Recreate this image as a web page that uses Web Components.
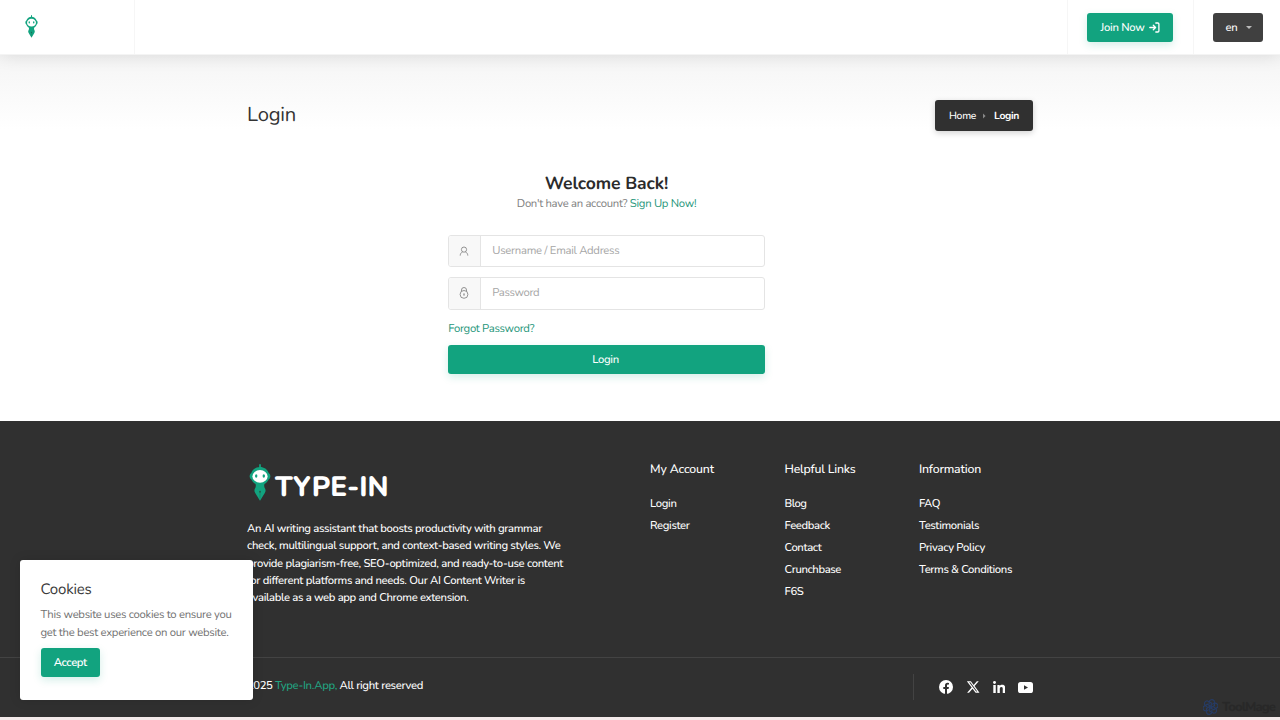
<!DOCTYPE html>
<html lang="en">
<head>
<meta charset="utf-8">
<title>Login - Type-In</title>
<style>
html,body{margin:0;height:720px;overflow:hidden;background:#fff}
body{font-family:Nunito,Lato,"Open Sans",sans-serif;font-size:11.3px;color:#333;text-rendering:geometricPrecision}
</style>
</head>
<body>
<login-page></login-page>
<script>
const make = (name, html, setup) => {
  const t = document.createElement('template');
  t.innerHTML = html;
  customElements.define(name, class extends HTMLElement {
    constructor() {
      super();
      this.attachShadow({mode: 'open'}).append(t.content.cloneNode(true));
    }
    connectedCallback() { if (setup) setup(this, this.shadowRoot); }
  });
};

make('login-page', `
<style>
:host{display:flex;flex-direction:column;height:720px;position:relative;overflow:hidden}
login-form{flex:1}
</style>
<site-header></site-header>
<title-bar></title-bar>
<login-form></login-form>
<site-footer></site-footer>
<cookie-card></cookie-card>
<site-mark></site-mark>`);

make('site-header', `
<style>
:host{display:flex;height:55px;box-sizing:border-box;background:#fff;box-shadow:0 0 18px rgba(0,0,0,.12);border-bottom:1px solid #f4f4f4;position:relative;z-index:2}
.logo{width:135px;border-right:1px solid #f6f6f6;padding:15px 0 0 25px;box-sizing:border-box}
.logo robot-logo{width:13px;height:23px}
.space{flex:1}
.cell{border-left:1px solid #f6f6f6;display:flex;align-items:center;box-sizing:border-box}
.join{width:126px;padding-left:19.500px}
.lang{width:87.500px;padding-left:19.500px}
.btn{height:29px;width:86px;box-sizing:border-box;padding:0 0 0 13.500px;display:flex;align-items:center;border-radius:3px;background:#12a37f;color:#fff;box-shadow:0 3px 8px rgba(18,163,127,.18);font-weight:500}
.dark{background:#404040;width:50px;padding-left:12.500px;box-shadow:none}
svg{display:block;margin-left:4.500px}
.caret{border:3px solid transparent;border-top-color:#bbb;border-bottom:0;margin-left:8px}
</style>
<div class="logo"><robot-logo></robot-logo></div><div class="space"></div>
<div class="cell join"><div class="btn"><x-text w="44">Join Now</x-text>
<svg width="11" height="11" viewBox="0 0 11 11" fill="none" stroke="#fff" stroke-width="1.300" stroke-linecap="round" stroke-linejoin="round"><path d="M.8 5.500h5.700M4.300 3.200l2.300 2.300-2.300 2.300M6.800 1h2q1.100 0 1.100 1.100v6.800q0 1.100-1.100 1.100h-2"/></svg></div></div>
<div class="cell lang"><div class="btn dark"><x-text w="12">en</x-text><i class="caret"></i></div></div>`);

make('robot-logo', `
<style>:host{display:block}svg{display:block;width:100%;height:100%}</style>
<svg viewBox="0 0 22 37" preserveAspectRatio="none"><path d="M11 .3v5" stroke="#12a37f" stroke-width="1.7"/>
<path fill="#12a37f" d="M11 3c4 0 7.400 2.300 8.700 6q1.700 1 1.700 3.200t-1.800 3.300c-1 2.300-2.500 3.700-4.100 4.600-.6 1.500-.3 3 .5 4.500.9 1.500.7 2.700-.2 4.500L11 36.700l-4.800-7.600c-.9-1.800-1.100-3-.2-4.500.8-1.500 1.100-3 .5-4.500-1.600-.9-3.100-2.300-4.100-4.600Q.6 14.400.6 12.200T2.300 9C3.600 5.300 7 3 11 3z"/>
<ellipse cx="11" cy="12.400" rx="7.600" ry="6.300" fill="#fff"/><g fill="#12a37f"><ellipse cx="7.200" cy="12" rx="1.200" ry="1.800"/><ellipse cx="14.800" cy="12" rx="1.200" ry="1.800"/></g>
<circle cx="11" cy="27.800" r="1" fill="#245c4c"/><path d="M11 28v6.500" stroke="#1b7960" stroke-width=".6"/></svg>`);

make('title-bar', `
<style>
:host{display:flex;box-sizing:border-box;height:91px;padding:45px 247px 0 247px;justify-content:space-between;background:linear-gradient(#f5f5f5,#fff 82%)}
.title{font-size:20.200px;font-weight:400;line-height:31px;color:#333}
.crumb{display:flex;align-items:center;box-sizing:border-box;width:98.500px;height:31px;padding-left:14.500px;border-radius:3px;background:#303030;color:#fff;font-size:10.400px;box-shadow:0 2px 6px rgba(0,0,0,.18);font-weight:500}
svg{margin:0 8px 0 7px}
b{font-weight:700}
</style>
<x-text class="title" w="49">Login</x-text>
<div class="crumb"><x-text w="27">Home</x-text><svg width="3" height="6" viewBox="0 0 3 6"><path d="M0 .5L2.600 3 0 5.500z" fill="#888"/></svg><b><x-text w="25">Login</x-text></b></div>`);

make('login-form', `
<style>
:host{display:flex;flex-direction:column;width:316.500px;margin-left:448.300px;box-sizing:border-box;padding-top:26px;color:#808080}
.h{display:flex;justify-content:center;font-size:17.500px;font-weight:700;color:#2b2b2b;line-height:24px}
.s{display:flex;justify-content:center;gap:2.500px;line-height:16px;margin-bottom:22.500px}
.s .g,.f{color:#26967a}
input-row+input-row{margin-top:10px}
.f{line-height:18px;margin:10px 0 7px}
.btn{height:29px;border-radius:3px;background:#12a37f;color:#fff;display:flex;justify-content:center;align-items:center;box-shadow:0 3px 8px rgba(18,163,127,.18);font-weight:500;padding:0 2px 0 0;box-sizing:border-box}
</style>
<div class="h"><x-text w="123.500">Welcome Back!</x-text></div>
<div class="s"><x-text w="110.500">Don't have an account?</x-text><x-text class="g" w="66.500">Sign Up Now!</x-text></div>
<input-row><svg slot="icon" width="10" height="10" viewBox="0 0 10 10" fill="none" stroke="#888" stroke-width=".9"><circle cx="5" cy="3.600" r="2.600"/><path d="M1.200 9.600c.1-2 1.100-3.200 2.400-3.700M8.800 9.600c-.1-2-1.100-3.200-2.400-3.700"/></svg><x-text w="127">Username / Email Address</x-text></input-row>
<input-row><svg slot="icon" width="10" height="12" viewBox="0 0 10 12" fill="none" stroke="#888" stroke-width=".9"><circle cx="5" cy="7.400" r="3.900"/><path d="M2.500 4.400V3a2.500 2.500 0 0 1 5 0v1.400"/><circle cx="5" cy="7" r=".7" fill="#888" stroke="none"/><path d="M5 7v1.800"/></svg><x-text w="47">Password</x-text></input-row>
<div class="f"><x-text w="86">Forgot Password?</x-text></div>
<div class="btn"><x-text w="26.500">Login</x-text></div>`);

make('input-row', `
<style>
:host{display:flex;box-sizing:border-box;height:32.500px;border:1px solid #e4e4e4;border-radius:3px;background:#fff;color:#a6a6a6;overflow:hidden}
.i{width:30px;padding-right:1px;border-right:1px solid #e4e4e4;background:#f8f8f8;display:flex;align-items:center;justify-content:center}
.t{padding-left:11px;line-height:30.500px}
</style><div class="i"><slot name="icon"></slot></div><div class="t"><slot></slot></div>`);

make('site-footer', `
<style>
:host{display:block;box-sizing:border-box;height:299.500px;background:#303030;border-bottom:3px solid #f3eaea;color:#fff;font-weight:500}
.top{display:grid;grid-template-columns:403px 134.500px 134.500px 1fr;height:237px;box-sizing:border-box;padding:38.500px 0 0 247px;border-bottom:1px solid #434343}
.brand{display:flex;height:38px;padding:4.500px 0 0 2px}
.brand robot-logo{width:22px;height:37px}
.brand .n{font-size:28px;font-weight:800;line-height:46px;margin-left:4px}
.p{display:flex;flex-direction:column;line-height:17.400px;margin-top:18.300px}
.bot{display:flex;padding:16px 246.500px 0 247px;align-items:flex-start;justify-content:space-between}
.c{display:flex;gap:2.500px;line-height:23.500px}
.c .g{color:#22a381}
.soc{display:flex;align-items:center;height:26px;margin-top:.5px;border-left:1px solid #434343;width:121px;box-sizing:border-box;padding-left:25.500px}
.soc svg{display:block;flex:none}
</style>
<div class="top">
<div><div class="brand"><robot-logo></robot-logo><x-text class="n" w="113.500">TYPE-IN</x-text></div>
<div class="p"><x-text w="295">An AI writing assistant that boosts productivity with grammar</x-text><x-text w="313.500">check, multilingual support, and context-based writing styles. We</x-text><x-text w="316">provide plagiarism-free, SEO-optimized, and ready-to-use content</x-text><x-text w="278">for different platforms and needs. Our AI Content Writer is</x-text><x-text w="221.500">available as a web app and Chrome extension.</x-text></div></div>
<link-column><x-text slot="h" w="64">My Account</x-text><x-text w="26.500">Login</x-text><x-text w="39.500">Register</x-text></link-column>
<link-column><x-text slot="h" w="71">Helpful Links</x-text><x-text w="22">Blog</x-text><x-text w="45.500">Feedback</x-text><x-text w="37">Contact</x-text><x-text w="56.500">Crunchbase</x-text><x-text w="19">F6S</x-text></link-column>
<link-column><x-text slot="h" w="62">Information</x-text><x-text w="21">FAQ</x-text><x-text w="60">Testimonials</x-text><x-text w="66">Privacy Policy</x-text><x-text w="93">Terms &amp; Conditions</x-text></link-column>
</div>
<div class="bot"><div class="c"><x-text w="25.500">2025</x-text><x-text class="g" w="62">Type-In.App,</x-text><x-text w="83.500">All right reserved</x-text></div>
<div class="soc">
<svg width="14" height="14" viewBox="0 0 14 14"><circle cx="7" cy="7" r="7" fill="#fff"/><path d="M6 14V9H4.300V7H6V5.600C6 3.800 7 2.800 8.600 2.800q.8 0 1.400.1v1.700h-.8C8.300 4.600 8 5.100 8 5.700V7h1.900l-.3 2H8v5z" fill="#303030"/></svg>
<svg style="margin-left:14px" width="12.500" height="12" viewBox="0 0 24 22" fill="#fff"><path d="M18.900 0h3.700l-8.100 9.300L24 22h-7.500l-5.900-7.700L3.900 22H.2l8.700-9.900L-.2 0h7.700l5.300 7zM17.600 19.800h2.100L6.300 2.100H4.100z"/></svg>
<svg style="margin-left:13px" width="12.500" height="12" viewBox="0 0 25 24" fill="#fff"><circle cx="3" cy="3" r="2.900"/><path d="M.6 8h4.900v16H.6zM8.700 8h4.700v2.200c.9-1.600 2.500-2.600 4.900-2.600 4.700 0 6.200 2.700 6.200 7.600V24h-5v-7.900c0-2.400-.4-4.200-2.700-4.200-2.500 0-3.200 1.900-3.200 4.200V24H8.700z"/></svg>
<svg style="margin-left:13px" width="15" height="11" viewBox="0 0 15 11"><rect width="15" height="11" rx="2.600" fill="#fff"/><path d="M6 3.200L10 5.500 6 7.800z" fill="#303030"/></svg>
</div></div>`);

make('link-column', `
<style>
:host{display:flex;flex-direction:column;align-items:flex-start}
.h{font-size:12.300px;line-height:22px;margin-bottom:11.500px}
.l{display:flex;flex-direction:column;line-height:22px}
</style><div class="h"><slot name="h"></slot></div><div class="l"><slot></slot></div>`);

make('cookie-card', `
<style>
:host{position:absolute;left:20px;top:560px;width:233px;height:140px;box-sizing:border-box;background:#fff;border-radius:3px;padding:20px 0 0 20.500px;box-shadow:0 0 12px rgba(0,0,0,.12);z-index:3;color:#707070;display:flex;flex-direction:column;align-items:flex-start}
.h{font-size:15px;line-height:21px;color:#3a3a3a;font-weight:400;margin-bottom:4.500px}
.p{display:flex;flex-direction:column;line-height:18px}
.btn{margin-top:6.500px;width:59.500px;height:29px;display:flex;align-items:center;justify-content:center;border-radius:3px;background:#12a37f;color:#fff;font-weight:600;box-shadow:0 3px 8px rgba(18,163,127,.18)}
</style>
<x-text class="h" w="51">Cookies</x-text>
<div class="p"><x-text w="191">This website uses cookies to ensure you</x-text><x-text w="188">get the best experience on our website.</x-text></div>
<div class="btn"><x-text w="33">Accept</x-text></div>`);

make('site-mark', `
<style>
:host{position:absolute;left:1203px;top:699px;display:flex;align-items:center;gap:4px;height:16px;color:#282828;font-size:13px;line-height:16px;font-weight:800}
svg{display:block}
</style>
<svg width="15" height="16" viewBox="-8 -8 16 16" fill="none" stroke="#263c66" stroke-width="1.200"><defs><path id="p" d="M-1.500-3V-4.800a3 3 0 0 1 5.500-1.700L4.300-1.500 0 1"/></defs><use href="#p"/><use href="#p" transform="rotate(60)"/><use href="#p" transform="rotate(120)"/><use href="#p" transform="rotate(180)"/><use href="#p" transform="rotate(240)"/><use href="#p" transform="rotate(300)"/></svg>
<x-text w="53">ToolMage</x-text>`);

/* One-line label whose tracking is set so that it spans w pixels. */
make('x-text', `<style>:host{display:inline-block;white-space:pre;align-self:flex-start;vertical-align:top}
:host-context(.btn),:host-context(.crumb){align-self:center}</style><slot></slot>`, el => {
  const w = parseFloat(el.getAttribute('w'));
  if (!w) return;
  el.style.letterSpacing = '0';
  const n = el.textContent.length;
  const gap = (w - el.getBoundingClientRect().width) / n;
  el.style.letterSpacing = gap.toFixed(3) + 'px';
});
</script>
</body>
</html>
